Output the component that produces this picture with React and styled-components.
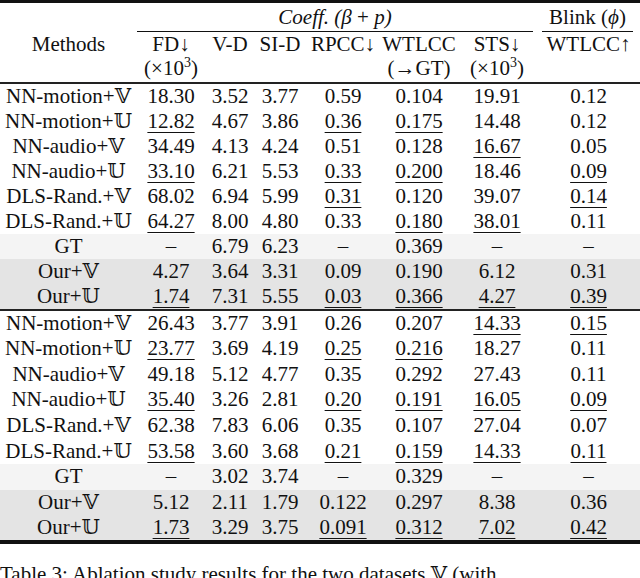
import React from 'react';
import styled, { createGlobalStyle } from 'styled-components';

const V = '\u{1D54D}';
const U = '\u{1D54C}';

const serif = '"Liberation Serif", "DejaVu Serif", "DejaVu Sans", serif';

const GlobalStyle = createGlobalStyle`
  html, body {
    margin: 0;
    padding: 0;
    background: #fff;
    overflow: hidden;
  }
  body {
    font-family: ${serif};
    color: #111;
  }
`;

const blocks = [
  [
    ['NN-motion+' + V, '18.30', '3.52', '3.77', '0.59', '0.104', '19.91', '0.12'],
    ['NN-motion+' + U, '_12.82', '4.67', '3.86', '_0.36', '_0.175', '14.48', '0.12'],
    ['NN-audio+' + V, '34.49', '4.13', '4.24', '0.51', '0.128', '_16.67', '0.05'],
    ['NN-audio+' + U, '_33.10', '6.21', '5.53', '_0.33', '_0.200', '18.46', '_0.09'],
    ['DLS-Rand.+' + V, '68.02', '6.94', '5.99', '_0.31', '0.120', '39.07', '_0.14'],
    ['DLS-Rand.+' + U, '_64.27', '8.00', '4.80', '0.33', '_0.180', '_38.01', '0.11'],
    ['GT', '–', '6.79', '6.23', '–', '0.369', '–', '–'],
    ['Our+' + V, '4.27', '3.64', '3.31', '0.09', '0.190', '6.12', '0.31'],
    ['Our+' + U, '_1.74', '7.31', '5.55', '_0.03', '_0.366', '_4.27', '_0.39'],
  ],
  [
    ['NN-motion+' + V, '26.43', '3.77', '3.91', '0.26', '0.207', '_14.33', '_0.15'],
    ['NN-motion+' + U, '_23.77', '3.69', '4.19', '_0.25', '_0.216', '18.27', '0.11'],
    ['NN-audio+' + V, '49.18', '5.12', '4.77', '0.35', '0.292', '27.43', '0.11'],
    ['NN-audio+' + U, '_35.40', '3.26', '2.81', '_0.20', '_0.191', '_16.05', '_0.09'],
    ['DLS-Rand.+' + V, '62.38', '7.83', '6.06', '0.35', '0.107', '27.04', '0.07'],
    ['DLS-Rand.+' + U, '_53.58', '3.60', '3.68', '_0.21', '_0.159', '_14.33', '_0.11'],
    ['GT', '–', '3.02', '3.74', '–', '0.329', '–', '–'],
    ['Our+' + V, '5.12', '2.11', '1.79', '0.122', '0.297', '8.38', '0.36'],
    ['Our+' + U, '_1.73', '3.29', '3.75', '_0.091', '_0.312', '_7.02', '_0.42'],
  ],
];

const shadeFor = (name) => {
  if (name === 'GT') return 'gt';
  if (name.startsWith('Our')) return 'ours';
  return 'plain';
};

const App = () => (
  <Page>
    <GlobalStyle />
    <Table>
      <colgroup>
        <col style={{ width: 137 }} />
        <col style={{ width: 68 }} />
        <col style={{ width: 50 }} />
        <col style={{ width: 50 }} />
        <col style={{ width: 76 }} />
        <col style={{ width: 76 }} />
        <col style={{ width: 80 }} />
        <col style={{ width: 103 }} />
      </colgroup>
      <Head>
        <GroupRow>
          <HeadCell />
          <HeadCell colSpan={6}>
            <GroupLabel $trimRight={4}>
              <i>Coeff.</i> <i>(β</i> + <i>p)</i>
            </GroupLabel>
          </HeadCell>
          <HeadCell>
            <GroupLabel $trimLeft={5} $trimRight={7}>
              Blink (<i>ϕ</i>)
            </GroupLabel>
          </HeadCell>
        </GroupRow>
        <TitleRow>
          <HeadCell>Methods</HeadCell>
          <HeadCell>FD↓</HeadCell>
          <HeadCell>V-D</HeadCell>
          <HeadCell>SI-D</HeadCell>
          <HeadCell>RPCC↓</HeadCell>
          <HeadCell>WTLCC</HeadCell>
          <HeadCell>STS↓</HeadCell>
          <HeadCell>WTLCC↑</HeadCell>
        </TitleRow>
        <UnitRow>
          <HeadCell />
          <HeadCell>
            (×10<sup>3</sup>)
          </HeadCell>
          <HeadCell />
          <HeadCell />
          <HeadCell />
          <HeadCell>(→GT)</HeadCell>
          <HeadCell>
            (×10<sup>3</sup>)
          </HeadCell>
          <HeadCell />
        </UnitRow>
      </Head>
      {blocks.map((rows, b) => (
        <Block key={b} $first={b === 0}>
          {rows.map((row) => (
            <Row key={row[0]} $shade={shadeFor(row[0])} $tall={b === 1}>
              {row.map((v, i) =>
                v.startsWith('_') ? (
                  <Cell key={i}>
                    <Second>{v.slice(1)}</Second>
                  </Cell>
                ) : (
                  <Cell key={i}>{v}</Cell>
                )
              )}
            </Row>
          ))}
        </Block>
      ))}
    </Table>
    <Caption>
      Table 3: Ablation study results for the two datasets {V} (with
    </Caption>
  </Page>
);

const Page = styled.div`
  width: 640px;
  height: 578px;
  overflow: hidden;
  font-family: ${serif};
`;

const Table = styled.table`
  width: 640px;
  table-layout: fixed;
  border-collapse: collapse;
  border-top: 3px solid #111;
  border-bottom: 4px solid #111;
  font-family: ${serif};
  font-size: 21px;
  color: #111;

  td,
  th {
    padding: 0;
    text-align: center;
    white-space: nowrap;
    font-weight: normal;
  }
`;

const Head = styled.thead`
  border-bottom: 2px solid #222;
`;

const HeadCell = styled.th`
  vertical-align: bottom;

  sup {
    font-size: 14px;
    line-height: 0;
    vertical-align: 8px;
  }
`;

const GroupRow = styled.tr`
  height: 30px;
  line-height: 26px;
`;

const GroupLabel = styled.div`
  border-bottom: 1px solid #111;
  margin-left: ${({ $trimLeft }) => $trimLeft || 0}px;
  margin-right: ${({ $trimRight }) => $trimRight || 0}px;
  padding-bottom: 1px;
`;

const TitleRow = styled.tr`
  line-height: 24px;
`;

const UnitRow = styled.tr`
  line-height: 24px;
  height: 27px;

  th {
    vertical-align: top;
  }
`;

const Block = styled.tbody`
  border-top: ${({ $first }) => ($first ? 'none' : '2px solid #222')};
`;

const shades = {
  plain: 'transparent',
  gt: '#f4f4f4',
  ours: '#e4e4e4',
};

const Row = styled.tr`
  height: ${({ $tall }) => ($tall ? 25.7 : 25)}px;
  line-height: 25px;
  background: ${({ $shade }) => shades[$shade]};
`;

const Cell = styled.td`
  vertical-align: middle;
`;

const Second = styled.span`
  text-decoration: underline;
  text-decoration-thickness: 1px;
  text-underline-offset: 4px;
`;

const Caption = styled.p`
  margin: 18px 0 0;
  font-size: 21px;
  line-height: 24px;
`;

export default App;
